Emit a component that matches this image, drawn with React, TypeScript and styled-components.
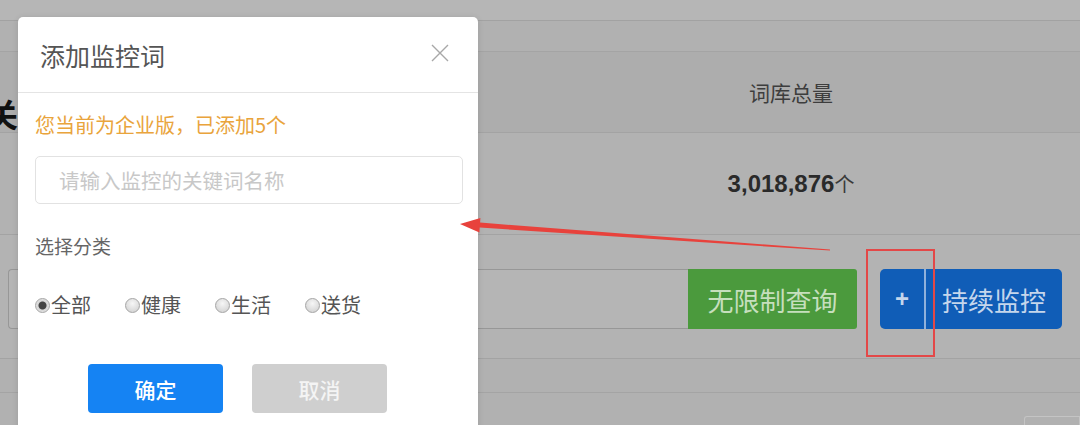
import styled, { createGlobalStyle } from "styled-components";

const GlobalStyle = createGlobalStyle`
    html, body {
        margin: 0;
        padding: 0;
    }
    body {
        font-family: "Noto Sans CJK SC", "Liberation Sans", sans-serif;
    }
`

const categories = ["全部", "健康", "生活", "送货"];

export default function App() {
    return (
        <Page>
            <GlobalStyle />
            <TopStrip />
            <Band />
            <TableRow $height={80} $bg="#adadad">
                <LeftCell>
                    {/* 被弹窗挡住的页面标题，只露出一点 */}
                    <TitleClip>
                        <PageTitle>关键词库</PageTitle>
                    </TitleClip>
                </LeftCell>
                <ValueCell>
                    <HeadText>词库总量</HeadText>
                </ValueCell>
            </TableRow>
            <TableRow $height={101} $bg="#b2b2b2">
                <LeftCell />
                <ValueCell>
                    <Count>3,018,876</Count>
                    <Unit>个</Unit>
                </ValueCell>
            </TableRow>
            <ActionRow>
                <SearchBox />
                <GreenButton>无限制查询</GreenButton>
                <BlueButton>
                    <PlusPart>+</PlusPart>
                    <Divider />
                    <LabelPart>持续监控</LabelPart>
                </BlueButton>
            </ActionRow>
            <Band $height={33} />
            <BottomRow>
                <Pager />
            </BottomRow>

            <Modal>
                <ModalHeader>
                    <ModalTitle>添加监控词</ModalTitle>
                    <CloseButton aria-label="close">
                        <svg width="18" height="18" viewBox="0 0 18 18">
                            <path d="M1 1 L17 17 M17 1 L1 17" stroke="#a8a8a8" strokeWidth="1.4" fill="none" />
                        </svg>
                    </CloseButton>
                </ModalHeader>
                <ModalBody>
                    <Notice>您当前为企业版，已添加5个</Notice>
                    <KeywordInput placeholder="请输入监控的关键词名称" />
                    <FieldLabel>选择分类</FieldLabel>
                    <RadioRow>
                        {categories.map((c, i) => (
                            <RadioItem key={c}>
                                <RadioDot $checked={i === 0} />
                                {c}
                            </RadioItem>
                        ))}
                    </RadioRow>
                    <ButtonRow>
                        <ModalButton $primary>确定</ModalButton>
                        <ModalButton>取消</ModalButton>
                    </ButtonRow>
                </ModalBody>
            </Modal>

            {/* 标注：红色箭头和方框 */}
            <Annotation viewBox="0 0 1080 425" width="1080" height="425">
                <polygon
                    points="460,224 480.4,218 480.1,222.6 830,249.6 830,250.6 479.7,227.6 479.4,232.4"
                    fill="#e8423c"
                />
            </Annotation>
            <RedFrame />
        </Page>
    );
}

const Page = styled.div`
    position: relative;
    width: 1080px;
    height: 425px;
    overflow: hidden;
    background-color: #b3b3b3;
    display: flex;
    flex-direction: column;
`

const TopStrip = styled.div`
    height: 20px;
    flex-shrink: 0;
    background-color: #b6b6b6;
    border-bottom: 1px solid #a2a2a2;
`

const Band = styled.div<{ $height?: number }>`
    height: ${(p) => p.$height ?? 30}px;
    flex-shrink: 0;
    background-color: #b1b1b1;
    border-bottom: 1px solid #a4a4a4;
`

const TableRow = styled.div<{ $height: number; $bg: string }>`
    height: ${(p) => p.$height}px;
    flex-shrink: 0;
    display: grid;
    grid-template-columns: 500px 1fr;
    background-color: ${(p) => p.$bg};
    border-bottom: 1px solid #a3a3a3;
`

const LeftCell = styled.div`
    display: flex;
    align-items: flex-end;
`

const TitleClip = styled.div`
    width: 18px;
    overflow: hidden;
`

const PageTitle = styled.div`
    margin-left: -14px;
    font-size: 32px;
    font-weight: 700;
    color: #111;
    line-height: 38px;
    white-space: nowrap;
`

const ValueCell = styled.div`
    display: flex;
    align-items: center;
    justify-content: center;
    padding-left: 2px;
`

const HeadText = styled.span`
    font-size: 21px;
    color: #3d3d3d;
`

const Count = styled.span`
    font-family: "Liberation Sans", Arial, sans-serif;
    font-size: 24px;
    font-weight: 700;
    color: #2a2a2a;
`

const Unit = styled.span`
    font-size: 20px;
    color: #3a3a3a;
`

const ActionRow = styled.div`
    height: 124px;
    flex-shrink: 0;
    display: flex;
    align-items: flex-start;
    padding: 34px 18px 0 8px;
    box-sizing: border-box;
    border-bottom: 1px solid #a3a3a3;
`

const SearchBox = styled.div`
    flex: 1;
    height: 60px;
    box-sizing: border-box;
    border: 1px solid #979797;
    border-right: none;
    border-radius: 4px 0 0 4px;
    background-color: #b5b5b5;
`

const GreenButton = styled.div`
    width: 169px;
    height: 60px;
    display: flex;
    align-items: center;
    justify-content: center;
    background-color: #4b9a3d;
    color: #c6dfbd;
    font-size: 26px;
    border-radius: 0 3px 3px 0;
`

const BlueButton = styled.div`
    margin-left: 23px;
    width: 182px;
    height: 60px;
    display: flex;
    align-items: stretch;
    background-color: #105db7;
    border-radius: 5px;
    color: #c5d6ec;
    font-size: 26px;
`

const PlusPart = styled.div`
    width: 44px;
    display: flex;
    align-items: center;
    justify-content: center;
    font-family: "Liberation Sans", Arial, sans-serif;
    font-weight: 700;
    font-size: 24px;
`

const Divider = styled.div`
    width: 2px;
    background-color: #90b1db;
`

const LabelPart = styled.div`
    flex: 1;
    display: flex;
    align-items: center;
    justify-content: center;
`

const BottomRow = styled.div`
    flex: 1;
    background-color: #b1b1b1;
    display: flex;
    justify-content: flex-end;
    align-items: flex-end;
`

const Pager = styled.div`
    width: 54px;
    height: 10px;
    margin-bottom: -2px;
    border: 1px solid #c4c4c4;
    border-bottom: none;
    border-radius: 3px 0 0 0;
`

const Modal = styled.div`
    position: absolute;
    left: 18px;
    top: 17px;
    width: 460px;
    height: 430px;
    background-color: #fff;
    border-radius: 5px;
    box-shadow: 0 1px 6px rgba(0, 0, 0, 0.12);
    display: flex;
    flex-direction: column;
`

const ModalHeader = styled.div`
    height: 75px;
    flex-shrink: 0;
    display: flex;
    align-items: center;
    justify-content: space-between;
    padding: 0 29px 0 22px;
    border-bottom: 1px solid #e4e4e4;
`

const ModalTitle = styled.h3`
    margin: 0;
    font-size: 25px;
    font-weight: 400;
    color: #555;
`

const CloseButton = styled.span`
    display: flex;
    width: 18px;
    height: 18px;
    margin-bottom: 3px;
`

const ModalBody = styled.div`
    padding: 0 15px 0 17px;
    display: flex;
    flex-direction: column;
`

const Notice = styled.p`
    margin: 18px 0 0;
    font-size: 20px;
    line-height: 28px;
    color: #e9a43c;
`

const KeywordInput = styled.input`
    margin-top: 17px;
    width: 428px;
    height: 48px;
    box-sizing: border-box;
    border: 1px solid #e2e2e2;
    border-radius: 5px;
    padding: 0 0 0 23px;
    font-family: "Noto Sans CJK SC", sans-serif;
    font-size: 20.5px;
    outline: none;

    &::placeholder {
        color: #c8c8c8;
    }
`

const FieldLabel = styled.div`
    margin-top: 28px;
    font-size: 19px;
    line-height: 28px;
    color: #666;
`

const RadioRow = styled.div`
    margin-top: 31px;
    display: flex;
    gap: 34px;
`

const RadioItem = styled.label`
    display: flex;
    align-items: center;
    gap: 1px;
    font-size: 20px;
    line-height: 28px;
    color: #555;
`

const RadioDot = styled.span<{ $checked?: boolean }>`
    flex-shrink: 0;
    display: block;
    width: 15px;
    height: 15px;
    box-sizing: border-box;
    border-radius: 50%;
    border: 1px solid #a5a5a5;
    background: ${(p) =>
        p.$checked
            ? "radial-gradient(circle, #444 0 3.5px, #d6d6d6 4.5px, #efefef 100%)"
            : "radial-gradient(circle at 50% 35%, #f6f6f6, #cdcdcd)"};
`

const ButtonRow = styled.div`
    margin-top: 45px;
    padding-left: 53px;
    display: flex;
    gap: 29px;
`

const ModalButton = styled.button<{ $primary?: boolean }>`
    width: 135px;
    height: 49px;
    border: none;
    border-radius: 4px;
    font-family: "Noto Sans CJK SC", sans-serif;
    font-size: 21px;
    font-weight: 500;
    background-color: ${(p) => (p.$primary ? "#1583f3" : "#cfcfcf")};
    color: ${(p) => (p.$primary ? "#fff" : "#f4f4f4")};
`

const Annotation = styled.svg`
    position: absolute;
    left: 0;
    top: 0;
    pointer-events: none;
`

const RedFrame = styled.div`
    position: absolute;
    left: 866px;
    top: 249px;
    width: 69px;
    height: 108px;
    box-sizing: border-box;
    border: 2px solid #e34848;
`
